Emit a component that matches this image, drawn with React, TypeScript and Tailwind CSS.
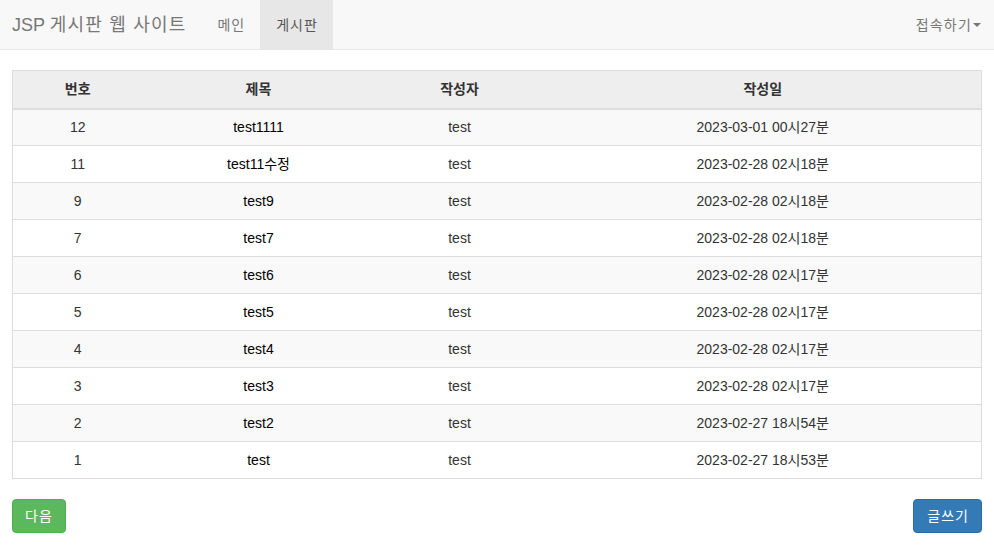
import React from 'react';

type Post = {
    id: number;
    title: string;
    writer: string;
    date: string;
};

const posts: Post[] = [
    { id: 12, title: 'test1111', writer: 'test', date: '2023-03-01 00시27분' },
    { id: 11, title: 'test11수정', writer: 'test', date: '2023-02-28 02시18분' },
    { id: 9, title: 'test9', writer: 'test', date: '2023-02-28 02시18분' },
    { id: 7, title: 'test7', writer: 'test', date: '2023-02-28 02시18분' },
    { id: 6, title: 'test6', writer: 'test', date: '2023-02-28 02시17분' },
    { id: 5, title: 'test5', writer: 'test', date: '2023-02-28 02시17분' },
    { id: 4, title: 'test4', writer: 'test', date: '2023-02-28 02시17분' },
    { id: 3, title: 'test3', writer: 'test', date: '2023-02-28 02시17분' },
    { id: 2, title: 'test2', writer: 'test', date: '2023-02-27 18시54분' },
    { id: 1, title: 'test', writer: 'test', date: '2023-02-27 18시53분' },
];

const font = { fontFamily: '"Liberation Sans", Arial, "Noto Sans CJK KR", sans-serif' };

export default function App() {
    return (
        <div className="min-h-[548px] bg-white text-[14px] leading-[20px] text-[#333]" style={font}>
            {/* Navbar */}
            <nav className="h-[50px] bg-[#f8f8f8] border-b border-[#e7e7e7] flex items-stretch pl-[12px]">
                <a className="flex items-center pr-[15px] text-[18px] text-[#777] whitespace-pre">
                    JSP <span className="tracking-[1.2px]">게시판 웹 사이트</span>
                </a>
                <ul className="flex">
                    <li className="flex items-center pl-[16px] pr-[15px] text-[#777] tracking-[1px]">메인</li>
                    <li className="flex items-center pl-[16px] pr-[15px] bg-[#e7e7e7] text-[#555] tracking-[1px]">게시판</li>
                </ul>
                <ul className="flex ml-auto">
                    <li className="flex items-center pl-[15px] pr-[13px] text-[#777]">
                        <span className="tracking-[1.2px]">접속하기</span>
                        <span className="ml-[1px] inline-block w-0 h-0 border-l-[4px] border-r-[4px] border-t-[4px] border-l-transparent border-r-transparent border-t-[#777]" />
                    </li>
                </ul>
            </nav>

            <div className="px-[12px] pt-[20px]">
                {/* Board table */}
                <table className="w-full border-collapse border border-[#ddd] text-center">
                    <thead>
                        <tr className="bg-[#eee]">
                            <th className="w-[130px] h-[38px] border-b-2 border-[#ddd] font-bold">번호</th>
                            <th className="w-[232px] border-b-2 border-[#ddd] font-bold">제목</th>
                            <th className="w-[170px] border-b-2 border-[#ddd] font-bold">작성자</th>
                            <th className="border-b-2 border-[#ddd] font-bold">작성일</th>
                        </tr>
                    </thead>
                    <tbody>
                        {posts.map((post, i) => (
                            <tr key={post.id} className={i % 2 === 0 ? 'bg-[#f9f9f9]' : 'bg-white'}>
                                <td className="h-[37px] border-t border-[#ddd]">{post.id}</td>
                                <td className="border-t border-[#ddd] text-black">{post.title}</td>
                                <td className="border-t border-[#ddd]">{post.writer}</td>
                                <td className="border-t border-[#ddd]">{post.date}</td>
                            </tr>
                        ))}
                    </tbody>
                </table>

                <div className="flex justify-between mt-[20px]">
                    <a className="h-[34px] pl-[12px] pr-[12px] flex items-center rounded-[4px] bg-[#5cb85c] border border-[#4cae4c] text-white tracking-[1px]">다음</a>
                    <a className="h-[34px] pl-[13px] pr-[12px] flex items-center rounded-[4px] bg-[#337ab7] border border-[#2e6da4] text-white tracking-[1px]">글쓰기</a>
                </div>
            </div>
        </div>
    );
}
